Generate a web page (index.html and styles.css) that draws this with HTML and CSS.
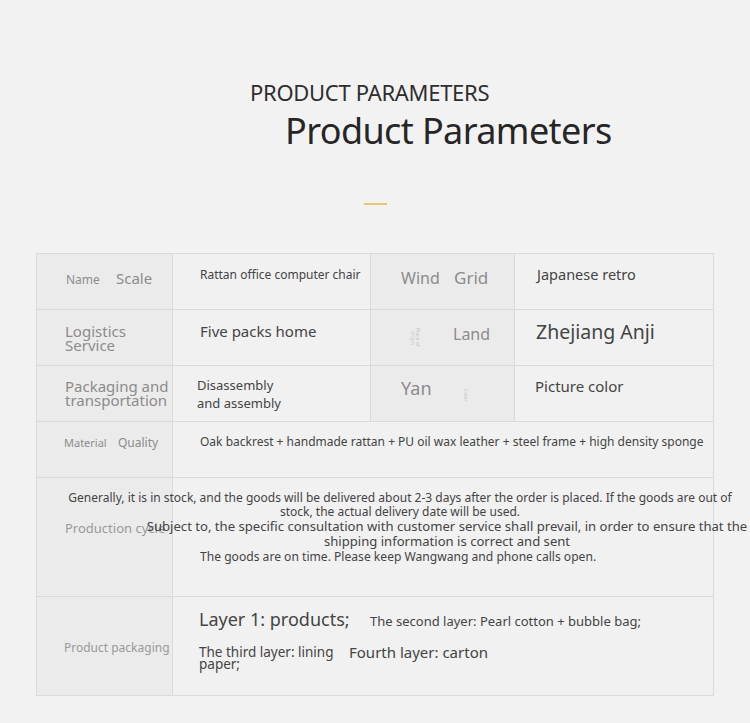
FILE: index.html
```html
<!DOCTYPE html>
<html lang="en">
<head>
<meta charset="utf-8">
<title>Product Parameters</title>
<link rel="stylesheet" href="styles.css">
</head>
<body>
<div class="page">
  <header class="head">
    <div class="kicker">PRODUCT PARAMETERS</div>
    <h1 class="title">Product Parameters</h1>
    <div class="bar"></div>
  </header>

  <div class="params">
    <div class="cell lab r1l"><span class="sm">Name</span><span class="md">Scale</span></div>
    <div class="cell val r1v">Rattan office computer chair</div>
    <div class="cell lab r1l2"><span class="w1">Wind</span><span class="w2">Grid</span></div>
    <div class="cell val r1v2">Japanese retro</div>

    <div class="cell lab r2l">Logistics<br>Service</div>
    <div class="cell val r2v">Five packs home</div>
    <div class="cell lab r2l2"><span class="tiny t1">Place of<br>origin</span><span class="w2">Land</span></div>
    <div class="cell val r2v2">Zhejiang Anji</div>

    <div class="cell lab r3l">Packaging and<br>transportation</div>
    <div class="cell val r3v">Disassembly<br>and assembly</div>
    <div class="cell lab r3l2"><span class="w3">Yan</span><span class="tiny t2">Color</span></div>
    <div class="cell val r3v2">Picture color</div>

    <div class="cell lab r4l"><span class="xs">Material</span><span class="sm2">Quality</span></div>
    <div class="cell val wide r4v">Oak backrest + handmade rattan + PU oil wax leather + steel frame + high density sponge</div>

    <div class="cell lab r5l">Production cycle</div>
    <div class="cell val wide r5v">
      <p class="p1">Generally, it is in stock, and the goods will be delivered about 2-3 days after the order is placed. If the goods are out of stock, the actual delivery date will be used.</p>
      <p class="p2">Subject to, the specific consultation with customer service shall prevail, in order to ensure that the shipping information is correct and sent</p>
      <p class="p3">The goods are on time. Please keep Wangwang and phone calls open.</p>
    </div>

    <div class="cell lab r6l">Product packaging</div>
    <div class="cell val wide r6v">
      <div class="line">
        <span class="l1">Layer 1: products;</span>
        <span class="l2">The second layer: Pearl cotton + bubble bag;</span>
      </div>
      <div class="line">
        <span class="l3">The third layer: lining paper;</span>
        <span class="l4">Fourth layer: carton</span>
      </div>
    </div>
  </div>
</div>
</body>
</html>
```

FILE: styles.css
```css
* { box-sizing: border-box; }
html, body { margin: 0; padding: 0; }
body {
  background: #f2f2f2;
  font-family: "Noto Sans", "Open Sans", sans-serif;
  color: #444;
  width: 750px;
  height: 723px;
  overflow: hidden;
}
.page { padding-top: 77px; }

.head { height: 176px; position: relative; }
.kicker {
  margin-left: 250px;
  font-size: 22px;
  line-height: 30px;
  color: #2e2e2e;
  letter-spacing: -0.3px;
}
.title {
  margin: 2px 0 0 285px;
  font-weight: 400;
  font-size: 36px;
  line-height: 44px;
  color: #262626;
  letter-spacing: -0.6px;
}
.bar {
  width: 23px;
  height: 2px;
  background: #e9c76d;
  margin: 50px 0 0 364px;
}

.params {
  margin-left: 36px;
  width: 678px;
  display: grid;
  grid-template-columns: 137px 198px 144px 199px;
  grid-template-rows: 56px 56px 56px 56px 119px 99px;
  border-top: 1px solid #dadada;
}
.cell {
  border-right: 1px solid #dadada;
  border-bottom: 1px solid #dadada;
  position: relative;
}
.lab { background: #ebebeb; color: #8c8c8c; }
.val { background: #f1f1f1; color: #444; }
.params > .cell:nth-child(4n+1),
.params .r4l, .params .r5l, .params .r6l { border-left: 1px solid #dadada; }
.wide { grid-column: 2 / 5; }

/* row 1 */
.r1l { display: flex; align-items: baseline; padding: 14px 0 0 29px; }
.sm { font-size: 12px; width: 50px; }
.md { font-size: 15px; }
.r1v { font-size: 12px; padding: 12px 0 0 27px; }
.r1l2 { display: flex; align-items: baseline; padding: 12px 0 0 30px; }
.w1 { font-size: 16px; width: 53px; }
.w2 { font-size: 17px; }
.r1v2 { font-size: 14.5px; padding: 10px 0 0 22px; }

/* row 2 */
.r2l { font-size: 15px; line-height: 14px; padding: 14px 0 0 28px; }
.r2v { font-size: 15px; padding: 11px 0 0 27px; }
.r2l2 { display: flex; align-items: center; padding: 0 0 0 37px; }
.tiny {
  font-size: 5px;
  line-height: 5px;
  color: #c4c4c4;
  writing-mode: vertical-rl;
  text-align: center;
}
.t1 { width: 12px; height: 27px; margin-right: 33px; }
.r2l2 .w2 { font-size: 16px; margin-top: -8px; }
.r2v2 { font-size: 19.5px; padding: 8px 0 0 21px; }

/* row 3 */
.r3l { font-size: 15px; line-height: 14px; padding: 13px 0 0 28px; }
.r3v { font-size: 13px; line-height: 18px; padding: 10px 0 0 24px; }
.r3l2 { display: flex; align-items: flex-start; padding: 10px 0 0 30px; }
.w3 { font-size: 18px; width: 62px; }
.t2 { margin-top: 8px; height: 22px; }
.r3v2 { font-size: 15px; padding: 10px 0 0 20px; }

/* row 4 */
.r4l { display: flex; align-items: baseline; padding: 12px 0 0 27px; }
.xs { font-size: 11px; width: 54px; }
.sm2 { font-size: 12px; }
.r4v { font-size: 12px; white-space: nowrap; padding: 11px 0 0 27px; }

/* row 5 */
.r5l { font-size: 13px; padding: 41px 0 0 28px; color: #999; }
.r5v { padding: 13px 0 0 0; }
.r5v p { margin: 0; color: #444; }
.p1 {
  font-size: 12px;
  line-height: 14px;
  width: 684px;
  margin-left: -115px !important;
  text-align: center;
}
.p2 {
  font-size: 13.1px;
  line-height: 15px;
  width: 602px;
  margin-left: -27px !important;
  text-align: center;
}
.p3 {
  font-size: 12.1px;
  line-height: 15px;
  padding-left: 27px;
}

/* row 6 */
.r6l { font-size: 12px; padding: 42px 0 0 27px; color: #999; }
.r6v { padding: 10px 0 0 26px; }
.line { display: flex; align-items: baseline; }
.l1 { font-size: 18px; width: 171px; }
.l2 { font-size: 13px; }
.line + .line { margin-top: 15px; align-items: flex-start; }
.l3 { font-size: 13.5px; line-height: 12px; width: 150px; }
.l4 { font-size: 15px; line-height: 18px; margin-top: -3px; }
```
